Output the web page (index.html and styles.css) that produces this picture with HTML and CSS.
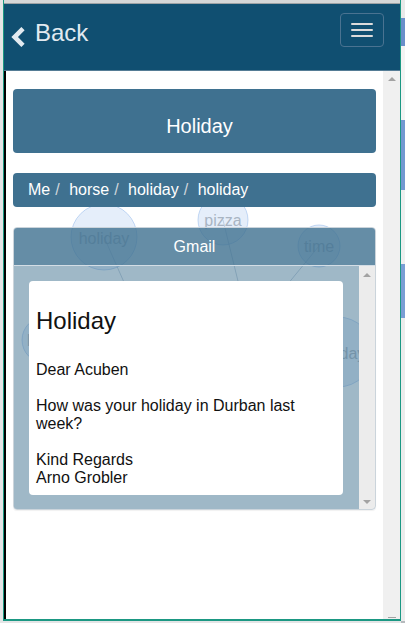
FILE: index.html
```html
<!DOCTYPE html>
<html lang="en">
<head>
<meta charset="utf-8">
<title>Holiday</title>
<link rel="stylesheet" href="styles.css">
</head>
<body>
<div class="frame">
  <div class="titlebar"></div>
  <header class="topbar">
    <a class="back" href="#">
      <svg class="chev" width="16" height="20" viewBox="0 0 16 20" aria-hidden="true"><path d="M13 1.6 L4.6 10 L13 18.4" fill="none" stroke="currentColor" stroke-width="4.6"/></svg>
      <span class="back-label">Back</span>
    </a>
    <button class="toggle" type="button" aria-label="Menu"><span class="bar"></span><span class="bar"></span><span class="bar"></span></button>
  </header>
  <div class="content">
    <main class="main">
      <svg class="graph" width="377" height="548" viewBox="0 0 377 548" aria-hidden="true">
        <g class="links">
          <line x1="98" y1="166" x2="159" y2="304"/>
          <line x1="217" y1="149" x2="244" y2="259"/>
          <line x1="313" y1="175" x2="244" y2="259"/>
          <line x1="39" y1="269" x2="159" y2="304"/>
          <line x1="332" y1="281" x2="244" y2="259"/>
          <line x1="244" y1="259" x2="159" y2="304"/>
        </g>
        <g class="nodes">
          <circle cx="244" cy="259" r="28"/>
          <circle cx="159" cy="304" r="28"/>
          <circle cx="98" cy="166" r="33"/>
          <circle cx="217" cy="149" r="25"/>
          <circle cx="313" cy="175" r="21"/>
          <circle cx="39" cy="269" r="23"/>
          <circle cx="332" cy="281" r="35"/>
        </g>
        <g class="labels">
          <text x="98" y="173">holiday</text>
          <text x="217" y="155">pizza</text>
          <text x="313" y="181">time</text>
          <text x="41" y="275">horse</text>
          <text x="334" y="288">holiday</text>
        </g>
      </svg>
      <div class="banner">Holiday</div>
      <ol class="crumbs">
        <li>Me</li><li>horse</li><li>holiday</li><li>holiday</li>
      </ol>
      <section class="panel">
        <div class="panel-head">Gmail</div>
        <div class="panel-body">
          <div class="panel-scroll">
            <article class="mail">
              <h2 class="mail-title">Holiday</h2>
              <p class="mail-text">Dear Acuben<br><br>How was your holiday in Durban last week?<br><br>Kind Regards<br>Arno Grobler</p>
            </article>
          </div>
          <div class="mini-scroll"><span class="arr-up"></span><span class="arr-down"></span></div>
        </div>
      </section>
    </main>
    <div class="vscroll"><span class="arr-up"></span><span class="dash"></span></div>
  </div>
</div>
<div class="side"></div>
</body>
</html>
```

FILE: styles.css
```css
* { box-sizing: border-box; }

html, body {
  margin: 0;
  padding: 0;
}

body {
  width: 405px;
  height: 623px;
  overflow: hidden;
  display: flex;
  align-items: flex-start;
  background: #e4e5e6;
  font-family: "Liberation Sans", Arial, sans-serif;
}

.frame {
  margin-left: 3px;
  width: 398px;
  height: 621px;
  border-left: 1px solid #1b9883;
  border-right: 1px solid #1b9883;
  border-bottom: 2px solid #1b9883;
  display: flex;
  flex-direction: column;
  background: #fff;
}

.titlebar {
  height: 4px;
  background: #d6d7d8;
  border-bottom: 1px solid #9ea2a5;
}

.topbar {
  height: 67px;
  background: #104f71;
  border-bottom: 1px solid #557c95;
  display: flex;
  justify-content: space-between;
  align-items: flex-start;
  padding: 9px 16px 0 6px;
}

.back {
  display: flex;
  align-items: flex-start;
  gap: 9px;
  color: #e2eaf0;
  text-decoration: none;
}

.chev {
  margin-top: 14px;
  display: block;
}

.back-label {
  margin-top: 6px;
  font-size: 24px;
  line-height: 28px;
}

.toggle {
  width: 44px;
  height: 34px;
  padding: 9px 10px;
  border: 1px solid #4a7391;
  border-radius: 4px;
  background: transparent;
  display: flex;
  flex-direction: column;
  gap: 4px;
}

.bar {
  display: block;
  width: 22px;
  height: 2px;
  border-radius: 1px;
  background: #dcdcdc;
}

.content {
  flex: 1;
  display: flex;
}

.main {
  position: relative;
  flex: 1;
  border-left: 2px solid #000;
  background: #fff;
  padding: 18px 7px 0 7px;
}

.graph {
  position: absolute;
  left: 0;
  top: 0;
  z-index: 0;
}

.links line {
  stroke: #c6d1dd;
  stroke-width: 1;
}

.nodes circle {
  fill: rgba(170, 200, 240, 0.3);
  stroke: rgba(150, 185, 235, 0.55);
  stroke-width: 1;
}

.labels text {
  font-family: "Liberation Sans", Arial, sans-serif;
  font-size: 16px;
  fill: #a9b5c3;
  text-anchor: middle;
}

.banner,
.crumbs,
.panel {
  position: relative;
  z-index: 1;
}

.banner {
  height: 64px;
  background: #3f7190;
  border-radius: 4px;
  color: #fff;
  font-size: 20px;
  display: flex;
  align-items: center;
  justify-content: center;
  padding: 10px 0 0 10px;
}

.crumbs {
  list-style: none;
  margin: 20px 0 0;
  padding: 8px 15px;
  background: #3f7190;
  border-radius: 4px;
  display: flex;
  font-size: 16px;
  line-height: 18px;
  color: #fff;
}

.crumbs li + li::before {
  content: "/\00a0";
  padding: 0 5px;
  color: #cfd6dc;
}

.panel {
  margin-top: 20px;
  border: 1px solid #cbd4db;
  border-radius: 4px;
  overflow: hidden;
  box-shadow: 0 1px 1px rgba(0, 0, 0, 0.06);
}

.panel-head {
  height: 38px;
  background: rgba(63, 113, 144, 0.8);
  border-bottom: 1px solid #d3dde5;
  color: #fff;
  font-size: 16px;
  line-height: 37px;
  text-align: center;
}

.panel-body {
  height: 243px;
  display: flex;
  background: rgba(63, 113, 144, 0.5);
}

.panel-scroll {
  flex: 1;
  padding: 15px 16px 15px 15px;
}

.mail {
  background: #fff;
  border-radius: 4px;
  padding: 7px 7px 8px;
  color: #111;
}

.mail-title {
  margin: 20px 0 27px;
  font-size: 24px;
  line-height: 26px;
  font-weight: normal;
}

.mail-text {
  margin: 0;
  font-size: 16px;
  line-height: 18px;
}

.mini-scroll {
  width: 16px;
  background: #ececec;
  display: flex;
  flex-direction: column;
  align-items: center;
  justify-content: space-between;
  padding: 7px 0 5px;
}

.vscroll {
  width: 17px;
  background: #f0f0f0;
  display: flex;
  flex-direction: column;
  align-items: center;
  justify-content: space-between;
  padding: 6px 0 0;
}

.arr-up {
  width: 0;
  height: 0;
  border-left: 4px solid transparent;
  border-right: 4px solid transparent;
  border-bottom: 4px solid #a3a3a3;
}

.arr-down {
  width: 0;
  height: 0;
  border-left: 4px solid transparent;
  border-right: 4px solid transparent;
  border-top: 4px solid #a3a3a3;
}

.dash {
  width: 8px;
  height: 1px;
  background: #a3a3a3;
  margin-bottom: 1px;
}

.side {
  width: 4px;
  height: 623px;
  background: linear-gradient(to bottom,
    #e9e9e9 0 18px,
    #6a8fca 18px 46px,
    #f3f3f3 46px 120px,
    #7398d1 120px 190px,
    #efefef 190px 264px,
    #7a9dd4 264px 318px,
    #ececec 318px 621px,
    #b6babd 621px);
}
```
